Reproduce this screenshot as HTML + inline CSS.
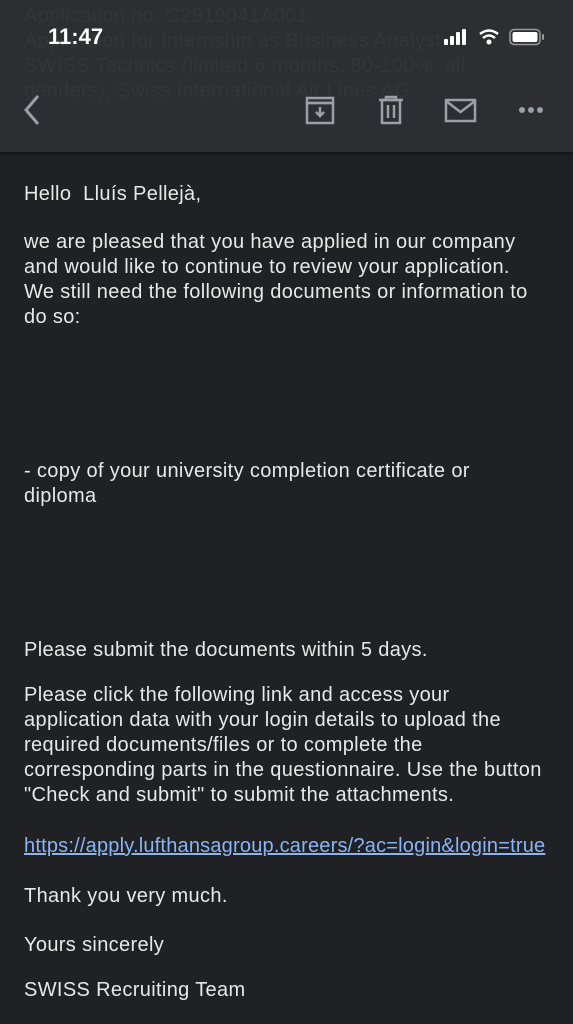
<!DOCTYPE html>
<html><head><meta charset="utf-8"><style>
html,body{margin:0;padding:0;}
body{width:573px;height:1024px;background:#202124;position:relative;overflow:hidden;font-family:"Liberation Sans",sans-serif;color:#e8e8e8;}
.hdr{position:absolute;left:0;top:0;width:573px;height:152px;background:#2d2e31;box-shadow:0 2px 4px rgba(0,0,0,.5);overflow:hidden;}
.ghost{position:absolute;left:24px;top:4px;font-size:20px;line-height:25px;color:#343538;white-space:pre;letter-spacing:0.3px;}
.t{position:absolute;left:24px;font-size:20px;line-height:25px;white-space:pre;letter-spacing:0.35px;}
a{color:#8ab4f8;text-decoration:underline;letter-spacing:0.2px;}
.time{position:absolute;left:48px;top:24px;font-size:22px;font-weight:bold;color:#fff;}
</style></head><body>
<div class="hdr">
<div class="ghost">Application no. C2919041A001
Application for Internship as Business Analyst
SWISS Technics (limited 6 months, 80-100%, all
genders), Swiss International Air Lines AG</div>
<div class="time">11:47</div>
<svg style="position:absolute;left:444px;top:28px" width="104" height="20">
<rect x="0" y="11" width="4" height="6" rx="1" fill="#fff"/><rect x="6" y="8" width="4" height="9" rx="1" fill="#fff"/><rect x="12" y="4" width="4" height="13" rx="1" fill="#fff"/><rect x="18" y="1" width="4" height="16" rx="1" fill="#fff"/>
<path d="M36 6 Q45 -1 54 6" stroke="#fff" stroke-width="2.5" fill="none"/><path d="M39 10 Q45 5 51 10" stroke="#fff" stroke-width="2.5" fill="none"/><circle cx="45" cy="14" r="2.5" fill="#fff"/>
<rect x="66" y="1.5" width="30" height="15" rx="4" stroke="#999" stroke-width="1.5" fill="none"/><rect x="68.5" y="4" width="25" height="10" rx="2" fill="#fff"/><rect x="98" y="6" width="2" height="6" rx="1" fill="#999"/>
</svg>
<svg style="position:absolute;left:20px;top:94px" width="24" height="32"><path d="M18 2 L6 16 L18 30" stroke="#9aa0a6" stroke-width="3" fill="none"/></svg>
<svg style="position:absolute;left:305px;top:96px" width="30" height="30" fill="none" stroke="#9aa0a6" stroke-width="2.5"><rect x="2" y="2" width="26" height="5"/><rect x="2" y="7" width="26" height="20"/><path d="M15 11v9M11 16l4 4 4-4"/></svg>
<svg style="position:absolute;left:377px;top:95px" width="28" height="30" fill="none" stroke="#9aa0a6" stroke-width="2.5"><path d="M2 5h24M9 5V2h10v3"/><rect x="5" y="5" width="18" height="23"/><path d="M11 10v13M17 10v13"/></svg>
<svg style="position:absolute;left:444px;top:98px" width="34" height="26" fill="none" stroke="#9aa0a6" stroke-width="2.5"><rect x="2" y="2" width="29" height="21"/><path d="M2 3l14.5 11L31 3"/></svg>
<svg style="position:absolute;left:518px;top:105px" width="28" height="10" fill="#9aa0a6"><circle cx="4" cy="5" r="3"/><circle cx="13" cy="5" r="3"/><circle cx="22" cy="5" r="3"/></svg>
</div>
<div class="t" style="top:182px">Hello  Lluís Pellejà,</div>
<div class="t" style="top:230px">we are pleased that you have applied in our company
and would like to continue to review your application.
We still need the following documents or information to
do so:</div>
<div class="t" style="top:459px">- copy of your university completion certificate or
diploma</div>
<div class="t" style="top:638px">Please submit the documents within 5 days.</div>
<div class="t" style="top:683px">Please click the following link and access your
application data with your login details to upload the
required documents/files or to complete the
corresponding parts in the questionnaire. Use the button
"Check and submit" to submit the attachments.</div>
<div class="t" style="top:834px"><a>https://apply.lufthansagroup.careers/?ac=login&amp;login=true</a></div>
<div class="t" style="top:884px">Thank you very much.</div>
<div class="t" style="top:933px">Yours sincerely</div>
<div class="t" style="top:978px">SWISS Recruiting Team</div>
</body></html>
